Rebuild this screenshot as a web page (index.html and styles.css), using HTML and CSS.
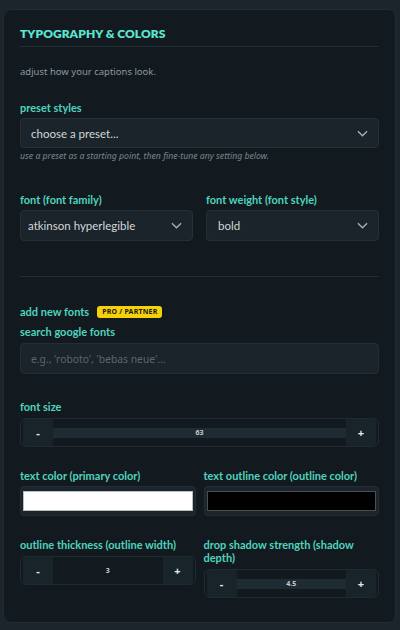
FILE: index.html
```html
<!DOCTYPE html>
<html>
<head>
<meta charset="utf-8">
<link rel="stylesheet" href="styles.css">
</head>
<body>
<section class="panel">
  <h2 class="title">TYPOGRAPHY &amp; COLORS</h2>
  <p class="intro">adjust how your captions look.</p>

  <div class="field preset">
    <label class="lbl">preset styles</label>
    <div class="select wide"><span>choose a preset...</span><svg class="chev" viewBox="0 0 12 7"><path d="M1 1l5 5 5-5"/></svg></div>
    <p class="hint">use a preset as a starting point, then fine-tune any setting below.</p>
  </div>

  <div class="row2 fonts">
    <div class="field">
      <label class="lbl">font (font family)</label>
      <div class="select"><span class="sm">atkinson hyperlegible</span><svg class="chev" viewBox="0 0 12 7"><path d="M1 1l5 5 5-5"/></svg></div>
    </div>
    <div class="field">
      <label class="lbl">font weight (font style)</label>
      <div class="select"><span>bold</span><svg class="chev" viewBox="0 0 12 7"><path d="M1 1l5 5 5-5"/></svg></div>
    </div>
  </div>

  <hr class="divider">

  <div class="addfonts">
    <span class="lbl">add new fonts</span><span class="badge">PRO / PARTNER</span>
  </div>
  <div class="field">
    <label class="lbl">search google fonts</label>
    <div class="input">e.g., 'roboto', 'bebas neue'...</div>
  </div>

  <div class="field size">
    <label class="lbl">font size</label>
    <div class="stepper">
      <span class="btn">-</span>
      <span class="val"><span class="strip">63</span></span>
      <span class="btn">+</span>
    </div>
  </div>

  <div class="row2 colors">
    <div class="field">
      <label class="lbl">text color (primary color)</label>
      <div class="color"><span class="swatch white"></span></div>
    </div>
    <div class="field">
      <label class="lbl">text outline color (outline color)</label>
      <div class="color"><span class="swatch black"></span></div>
    </div>
  </div>

  <div class="row2 steps">
    <div class="field">
      <label class="lbl">outline thickness (outline width)</label>
      <div class="stepper">
        <span class="btn">-</span>
        <span class="val"><span class="plain">3</span></span>
        <span class="btn">+</span>
      </div>
    </div>
    <div class="field">
      <label class="lbl">drop shadow strength (shadow depth)</label>
      <div class="stepper">
        <span class="btn">-</span>
        <span class="val"><span class="strip">4.5</span></span>
        <span class="btn">+</span>
      </div>
    </div>
  </div>
</section>
</body>
</html>
```

FILE: styles.css
```css
* { box-sizing: border-box; }
html, body { margin: 0; padding: 0; }
body {
  background: #1b252b;
  font-family: "Noto Sans", "Open Sans", sans-serif;
  width: 400px;
  height: 630px;
  padding: 9px 4px 0 3px;
}
.panel {
  background: #121a20;
  border: 1px solid #202b32;
  border-radius: 8px;
  height: 614px;
  padding: 16px 16px 0 16px;
}
.title {
  margin: 0;
  font-family: Lato, "Noto Sans", sans-serif;
  font-size: 12px;
  line-height: 16px;
  font-weight: 800;
  letter-spacing: 0.05px;
  color: #5ce6d1;
  padding-bottom: 4px;
  border-bottom: 1px solid #222e35;
}
.intro {
  margin: 18px 0 0;
  font-size: 9.5px;
  line-height: 14px;
  color: #8e989e;
}
.lbl {
  display: block;
  font-family: Lato, "Noto Sans", sans-serif;
  font-size: 11px;
  line-height: 14px;
  font-weight: 700;
  color: #4fd3bd;
}
.field { display: flex; flex-direction: column; min-width: 0; }
.preset { margin-top: 22px; }
.select {
  margin-top: 3px;
  height: 30px;
  background: #1a242a;
  border: 1px solid #243038;
  border-radius: 4px;
  display: flex;
  align-items: center;
  justify-content: space-between;
  padding: 0 10px 0 10px;
  font-family: Lato, "Noto Sans", sans-serif;
  font-size: 11.5px;
  color: #d3d8da;
}
.chev {
  width: 11px;
  height: 7px;
  fill: none;
  stroke: #a6afb4;
  stroke-width: 1.5;
}
.hint {
  margin: 3px 0 0;
  font-size: 8.7px;
  line-height: 11px;
  font-style: italic;
  color: #7b858b;
}
.row2 { display: grid; grid-template-columns: 1fr 1fr; }
.fonts { margin-top: 31px; column-gap: 13px; }
.fonts .select { height: 31px; }
.fonts .field:last-child .select { padding-left: 11px; }
.fonts .field:first-child .select { padding-left: 7px; }
.divider {
  margin: 35px 0 0;
  border: 0;
  border-top: 1px solid #222e35;
}
.addfonts {
  margin-top: 28px;
  display: flex;
  align-items: center;
  gap: 8px;
}
.addfonts .lbl { display: inline; }
.badge {
  background: #f5d10c;
  color: #1a1a10;
  font-size: 7px;
  font-weight: 700;
  line-height: 12px;
  padding: 0 5px;
  border-radius: 3px;
  letter-spacing: 0.2px;
}
.addfonts + .field { margin-top: 6px; }
.input {
  margin-top: 4px;
  height: 31px;
  background: #1a242a;
  border: 1px solid #222d34;
  border-radius: 4px;
  padding: 0 10px;
  display: flex;
  align-items: center;
  font-size: 10.3px;
  color: #5b666c;
}
.size { margin-top: 26px; }
.stepper {
  margin-top: 4px;
  height: 29px;
  border: 1px solid #1f2b32;
  border-radius: 6px;
  display: flex;
  align-items: stretch;
  padding: 0 2px;
}
.btn {
  width: 30px;
  flex: none;
  background: #19232a;
  color: #e6eaec;
  font-weight: 700;
  font-size: 11px;
  display: flex;
  align-items: center;
  justify-content: center;
}
.val {
  flex: 1;
  display: flex;
  align-items: center;
}
.strip, .plain {
  flex: 1;
  height: 10px;
  text-align: center;
  font-size: 7px;
  font-weight: 700;
  line-height: 10px;
  color: #c4ccd0;
}
.strip { background: #1f2b32; }
.colors { margin-top: 22px; column-gap: 8px; }
.color {
  margin-top: 3px;
  height: 30px;
  background: #1a242a;
  border: 1px solid #222d34;
  border-radius: 4px;
  padding: 4px 2px;
  display: flex;
}
.swatch { flex: 1; border: 1px solid #9aa0a3; }
.swatch.white { background: #ffffff; border-color: #b9bec0; }
.swatch.black { background: #000000; border-color: #4a4f52; }
.steps { margin-top: 22px; column-gap: 8px; align-items: start; }
.steps .lbl { line-height: 13px; }
.steps .stepper { margin-top: 5px; }
```
